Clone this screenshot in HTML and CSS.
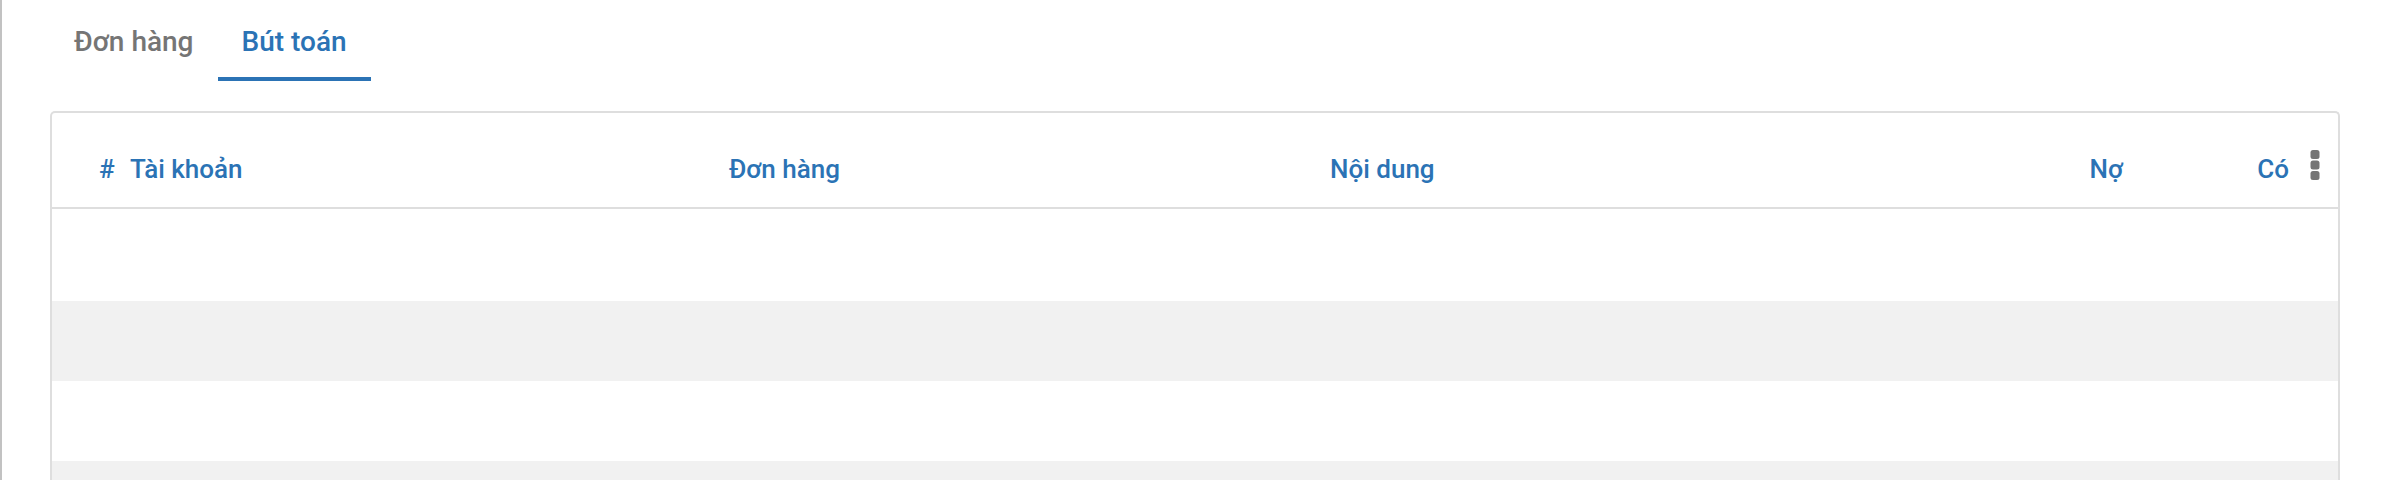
FILE: index.html
```html
<!DOCTYPE html>
<html lang="vi">
<head>
<meta charset="utf-8">
<title>Bút toán</title>
<link rel="stylesheet" href="styles.css">
</head>
<body>
<div class="page">
  <nav class="tabs">
    <div class="tab">Đơn hàng</div>
    <div class="tab active">Bút toán</div>
  </nav>
  <section class="card">
    <div class="thead">
      <div class="th num">#</div>
      <div class="th">Tài khoản</div>
      <div class="th">Đơn hàng</div>
      <div class="th">Nội dung</div>
      <div class="th right">Nợ</div>
      <div class="th right">Có</div>
      <div class="th menu">
        <svg class="kebab" width="10" height="30" viewBox="0 0 10 30" aria-hidden="true">
          <rect x="0.5" y="0" width="9" height="9" rx="2.5"/>
          <rect x="0.5" y="10.5" width="9" height="9" rx="2.5"/>
          <rect x="0.5" y="21" width="9" height="9" rx="2.5"/>
        </svg>
      </div>
    </div>
    <div class="tbody">
      <div class="row"></div>
      <div class="row"></div>
      <div class="row"></div>
      <div class="row"></div>
    </div>
  </section>
</div>
</body>
</html>
```

FILE: styles.css
```css
html, body {
  margin: 0;
  padding: 0;
  background: #ffffff;
}
body {
  font-family: Roboto, "Liberation Sans", Arial, sans-serif;
}
.page {
  min-height: 480px;
  border-left: 2px solid #c2c2c2;
  padding: 0 48px;
  box-sizing: border-box;
}
.tabs {
  display: flex;
}
.tab {
  font-size: 28px;
  font-weight: 500;
  line-height: 40px;
  color: #757575;
  padding: 22px 24px 15px;
  border-bottom: 4px solid transparent;
}
.tab.active {
  color: #2b73b5;
  border-bottom-color: #2b73b5;
}
.card {
  margin-top: 30px;
  border: 2px solid #dedede;
  border-bottom: none;
  border-radius: 5px 5px 0 0;
  overflow: hidden;
  height: 400px;
}
.thead {
  display: grid;
  grid-template-columns: 30px 599px 601px 1fr 160px 166px 49px;
  padding-left: 48px;
  border-bottom: 2px solid #dedede;
}
.th {
  font-size: 26px;
  font-weight: 500;
  line-height: 40px;
  color: #2b73b5;
  padding: 36px 0 18px;
  white-space: nowrap;
}
.th.num {
  margin-left: -1px;
}
.th.right {
  text-align: right;
}
.th.menu {
  padding: 37px 0 0 21px;
  box-sizing: border-box;
  height: 94px;
}
.kebab {
  display: block;
  fill: #757575;
}
.tbody {
  padding-top: 12px;
}
.row {
  height: 80px;
  background: #ffffff;
}
.row:nth-child(even) {
  background: #f1f1f1;
}
```
